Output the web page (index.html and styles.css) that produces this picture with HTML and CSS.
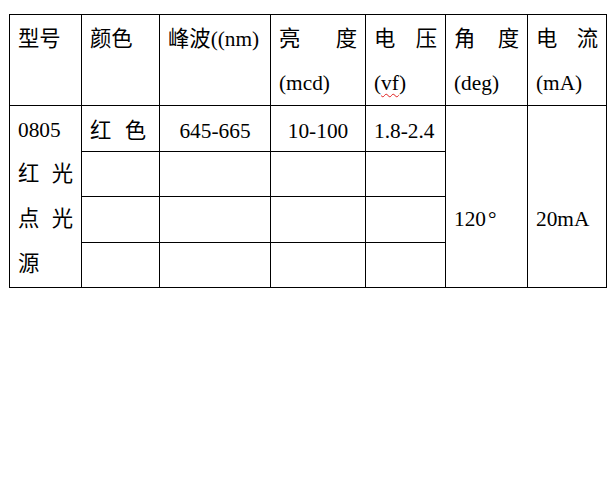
FILE: index.html
```html
<!DOCTYPE html>
<html>
<head>
<meta charset="utf-8">
<title>0805 红光点光源</title>
<link rel="stylesheet" href="styles.css">
</head>
<body>
<div class="page">
<table class="spec">
  <colgroup>
    <col class="c1"><col class="c2"><col class="c3"><col class="c4"><col class="c5"><col class="c6"><col class="c7">
  </colgroup>
  <tr class="head">
    <td>型号</td>
    <td>颜色</td>
    <td>峰波((nm)</td>
    <td><div class="spread"><span>亮</span><span>度</span></div><div>(mcd)</div></td>
    <td><div class="spread"><span>电</span><span>压</span></div><div>(<span class="spell">vf</span>)</div></td>
    <td><div class="spread"><span>角</span><span>度</span></div><div>(deg)</div></td>
    <td><div class="spread"><span>电</span><span>流</span></div><div>(mA)</div></td>
  </tr>
  <tr class="r1">
    <td rowspan="4" class="model">
      <div>0805</div>
      <div class="spread"><span>红</span><span>光</span></div>
      <div class="spread"><span>点</span><span>光</span></div>
      <div>源</div>
    </td>
    <td><span class="color">红 色</span></td>
    <td class="center">645-665</td>
    <td class="center">10-100</td>
    <td>1.8-2.4</td>
    <td rowspan="4" class="low">120<span class="deg">°</span></td>
    <td rowspan="4" class="low">20mA</td>
  </tr>
  <tr class="r2"><td></td><td></td><td></td><td></td></tr>
  <tr class="r3"><td></td><td></td><td></td><td></td></tr>
  <tr class="r4"><td></td><td></td><td></td><td></td></tr>
</table>
</div>
</body>
</html>
```

FILE: styles.css
```css
html, body {
  margin: 0;
  padding: 0;
  background: #ffffff;
}

.page {
  padding: 14px 0 0 9px;
}

.spec {
  border-collapse: collapse;
  table-layout: fixed;
  width: 597px;
  font-family: "Liberation Serif", "Times New Roman", "Noto Sans CJK SC", serif;
  font-size: 21.33px;
  line-height: 45px;
  color: #000000;
}

.c1 { width: 72px; }
.c2 { width: 78px; }
.c3 { width: 111px; }
.c4 { width: 95px; }
.c5 { width: 80px; }
.c6 { width: 82px; }
.c7 { width: 79px; }

.spec td {
  border: 1px solid #000000;
  padding: 0 8px;
  vertical-align: top;
  text-align: left;
  white-space: nowrap;
  overflow: hidden;
}

.head td { line-height: 44px; padding-top: 2px; }
.r1 td { height: 40px; line-height: 40px; padding-top: 5px; }
.r2 td { height: 44px; }
.r3 td { height: 45px; }
.r4 td { height: 44px; }

.spec td.model { line-height: 44.75px; padding-top: 1.5px; height: auto; }
.spec td.low { line-height: 45px; padding-top: 91px; height: auto; }

.center { text-align: center !important; }

.spread {
  display: flex;
  justify-content: space-between;
}

.color { word-spacing: 8px; }

.deg { margin-left: 2px; }

.spell {
  text-decoration: underline wavy #e02020;
  text-decoration-thickness: 1px;
  text-underline-offset: 3px;
}
```
